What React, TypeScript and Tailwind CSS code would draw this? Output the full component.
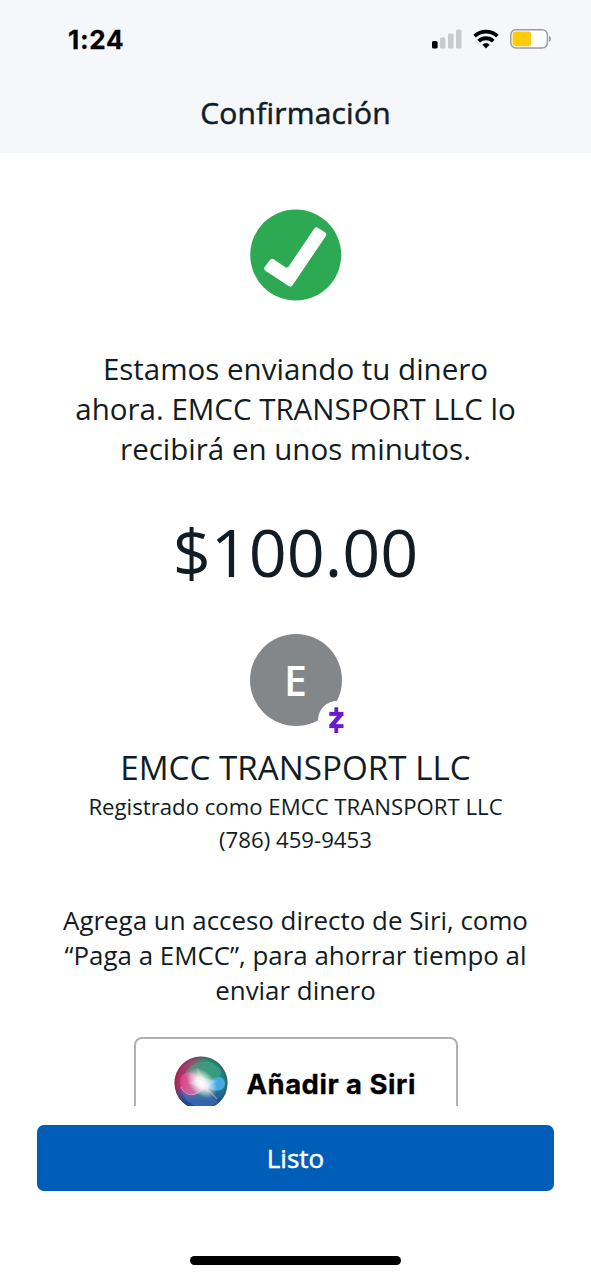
import type { ReactNode } from "react";

type LineProps = {
  children: ReactNode;
  className?: string;
};

function Line({ children, className = "" }: LineProps) {
  return <span className={`block whitespace-nowrap ${className}`}>{children}</span>;
}

function SignalIcon() {
  return (
    <svg width="30" height="20" viewBox="0 0 30 20" aria-hidden="true">
      <rect x="0" y="12" width="5.6" height="7.5" rx="1.6" fill="#000" />
      <rect x="8" y="8.6" width="5.4" height="10.9" rx="1.6" fill="#c9cacd" />
      <rect x="16" y="4.6" width="5.6" height="14.9" rx="1.6" fill="#c9cacd" />
      <rect x="24" y="0.6" width="5.6" height="18.9" rx="1.6" fill="#c9cacd" />
    </svg>
  );
}

function WifiIcon() {
  return (
    <svg width="26" height="20" viewBox="0 0 26 20" aria-hidden="true">
      <g fill="none" stroke="#000" strokeWidth="3.8">
        <path d="M1.6 7.2a16.6 16.6 0 0 1 22.8 0" />
        <path d="M5.7 12.2a10.5 10.5 0 0 1 14.6 0" />
      </g>
      <path
        d="M9.6 15.8a5 5 0 0 1 6.8 0L13 19.2z"
        fill="#000"
        stroke="#000"
        strokeWidth="0.5"
        strokeLinejoin="round"
      />
    </svg>
  );
}

function BatteryIcon() {
  return (
    <svg width="42" height="20" viewBox="0 0 42 20" aria-hidden="true">
      <rect x="0.8" y="0.8" width="36.6" height="18.2" rx="5.2" fill="#fff" stroke="#9b9ca0" strokeWidth="1.5" />
      <rect x="2.6" y="2.6" width="18.6" height="14.6" rx="3" fill="#fecb0a" />
      <path d="M39 6.8c2.6.6 2.6 5.6 0 6.2z" fill="#9b9ca0" />
    </svg>
  );
}

function StatusBar() {
  return (
    <div className="flex h-[74px] items-start justify-between pt-[24px] pr-[39px] pl-[68px]">
      <span className="font-['Inter',sans-serif] text-[26px] leading-[32px] font-bold tracking-[0.7px] text-black [-webkit-text-stroke:0.3px]">
        1:24
      </span>
      <div className="flex items-center gap-[11px] pt-[5px]">
        <SignalIcon />
        <WifiIcon />
        <BatteryIcon />
      </div>
    </div>
  );
}

function SuccessMark() {
  return (
    <svg width="92" height="92" viewBox="0 0 92 92" className="shrink-0" aria-hidden="true">
      <circle cx="45.7" cy="46" r="45.5" fill="#2ea953" />
      <path
        d="M15 57.5L20 51Q21.800 48.800 24.100 50.400L35 58Q37.300 59.400 38.800 57.200L64 20Q65.500 17.400 68.100 18.900L75 23.200Q77.300 24.700 75.800 27.100L42.500 76.300Q40.900 78.600 38.600 77L15.400 61.800Q13.100 60 15 57.500Z"
        fill="#fff"
      />
    </svg>
  );
}

function ZelleBadge() {
  return (
    <svg width="38" height="38" viewBox="0 0 38 38" aria-hidden="true">
      <circle cx="19" cy="19" r="19" fill="#fff" />
      <g fill="none" stroke="#6a1bd0" strokeWidth="4">
        <path d="M11.3 12.9H25.5" />
        <path d="M11.3 25.1H25.5" />
        <path d="M23.300 13L13.300 25" strokeWidth="4.400" />
        <path d="M18.300 6.200V12M18.300 26V31.900" strokeWidth="3.800" />
      </g>
    </svg>
  );
}

function Avatar() {
  return (
    <div className="relative mt-[43px] flex size-[92px] shrink-0 items-center justify-center rounded-full bg-[#84878a]">
      <span className="text-[41px] leading-[41px] font-semibold text-white">E</span>
      <div className="absolute top-[67px] left-[68px]">
        <ZelleBadge />
      </div>
    </div>
  );
}

function SiriOrb() {
  return (
    <svg width="54" height="54" viewBox="0 0 54 54" className="mb-[2px] shrink-0" aria-hidden="true">
      <defs>
        <linearGradient id="orb" x1="0" y1="0.4" x2="1" y2="0.5">
          <stop offset="0" stopColor="#c21d5c" />
          <stop offset="0.3" stopColor="#94506f" />
          <stop offset="0.55" stopColor="#2f8c70" />
          <stop offset="1" stopColor="#167f80" />
        </linearGradient>
        <linearGradient id="base" x1="0" y1="0" x2="0" y2="1">
          <stop offset="0.55" stopColor="#2160ad" stopOpacity="0" />
          <stop offset="0.85" stopColor="#174d9c" />
        </linearGradient>
        <radialGradient id="glow">
          <stop offset="0" stopColor="#fff" />
          <stop offset="0.35" stopColor="#fff" stopOpacity="0.85" />
          <stop offset="1" stopColor="#fff" stopOpacity="0" />
        </radialGradient>
        <linearGradient id="pink" x1="0" y1="0" x2="1" y2="0">
          <stop offset="0" stopColor="#e0458c" />
          <stop offset="1" stopColor="#f0a3cc" />
        </linearGradient>
        <clipPath id="disc">
          <circle cx="27" cy="27" r="26.5" />
        </clipPath>
      </defs>
      <g clipPath="url(#disc)">
        <rect width="54" height="54" fill="url(#orb)" />
        <path d="M11 18C17 5 32 2 43 10C50 16 47 24 41 25L27 28Z" fill="#46ab85" fillOpacity="0.55" />
        <rect width="54" height="54" fill="url(#base)" />
        <path d="M6 27C6 17 15 13 22 19L32 30C25 43 7 42 6 27Z" fill="url(#pink)" fillOpacity="0.8" />
        <path d="M6 30C10 41 20 42 29 32L46 48C30 58 10 50 6 30Z" fill="#6d8bcf" fillOpacity="0.35" />
        <path d="M7 31C11 40 19 41 26 35" fill="none" stroke="#c7a6e6" strokeOpacity="0.8" />
        <path d="M31 30C37 25 39 21 45 21C53 22 53 33 45 34.5C39 35 36 33 31 30Z" fill="#45a9e6" />
        <path d="M32 32L43 43" stroke="#c78bb4" strokeOpacity="0.8" strokeWidth="1.5" />
        <ellipse cx="28" cy="27" rx="18" ry="12" fill="url(#glow)" transform="rotate(45 28 27)" />
        <path d="M23 11L30 22L44 25L34 30L35 38L27 31L14 27L23 23Z" fill="#fff" fillOpacity="0.2" />
      </g>
      <circle cx="27" cy="27" r="25.6" fill="none" stroke="#4b3a52" strokeOpacity="0.35" strokeWidth="2" />
    </svg>
  );
}

function SiriButton() {
  return (
    <button
      type="button"
      className="mt-[29px] flex h-[93px] w-[324px] shrink-0 items-center rounded-[8px] border-2 border-[#b0b0b0] bg-white pl-[38px]"
    >
      <SiriOrb />
      <span className="ml-[19px] font-['Inter',sans-serif] text-[27.5px] leading-[32px] font-bold tracking-[0.5px] whitespace-nowrap text-black [-webkit-text-stroke:0.3px]">
        Añadir a Siri
      </span>
    </button>
  );
}

export default function App() {
  return (
    <div className="flex h-[1280px] w-[591px] flex-col overflow-hidden bg-white font-['Open_Sans',sans-serif] text-[#111c24]">
      <header className="h-[153px] shrink-0 bg-[#f5f7fb]">
        <StatusBar />
        <h1 className="text-center text-[30px] leading-[78px] tracking-[0.2px] [-webkit-text-stroke:0.5px]">
          Confirmación
        </h1>
      </header>

      <main className="flex h-[953px] shrink-0 flex-col items-center overflow-hidden pt-[56px] text-center">
        <SuccessMark />
        <p className="mt-[48px] text-[29.5px] leading-[40px]">
          <Line>Estamos enviando tu dinero</Line>
          <Line>ahora. EMCC TRANSPORT LLC lo</Line>
          <Line>recibirá en unos minutos.</Line>
        </p>
        <p className="mt-[42px] text-[66.5px] leading-[80px]">$100.00</p>
        <Avatar />
        <h2 className="mt-[20px] text-[33.2px] leading-[44px] whitespace-nowrap">EMCC TRANSPORT LLC</h2>
        <p className="text-[22.2px] leading-[33px]">
          <Line>Registrado como EMCC TRANSPORT LLC</Line>
          <Line>(786) 459-9453</Line>
        </p>
        <p className="mt-[47px] text-[25.9px] leading-[35px]">
          <Line>Agrega un acceso directo de Siri, como</Line>
          <Line>“Paga a EMCC”, para ahorrar tiempo al</Line>
          <Line>enviar dinero</Line>
        </p>
        <SiriButton />
      </main>

      <footer className="flex flex-col items-center pt-[19px]">
        <button
          type="button"
          className="h-[66px] w-[517px] rounded-[7px] bg-[#005eb8] pt-px text-[26px] text-white [-webkit-text-stroke:0.5px]"
        >
          Listo
        </button>
        <div className="mt-[65px] h-[9px] w-[211px] rounded-full bg-black" />
      </footer>
    </div>
  );
}
